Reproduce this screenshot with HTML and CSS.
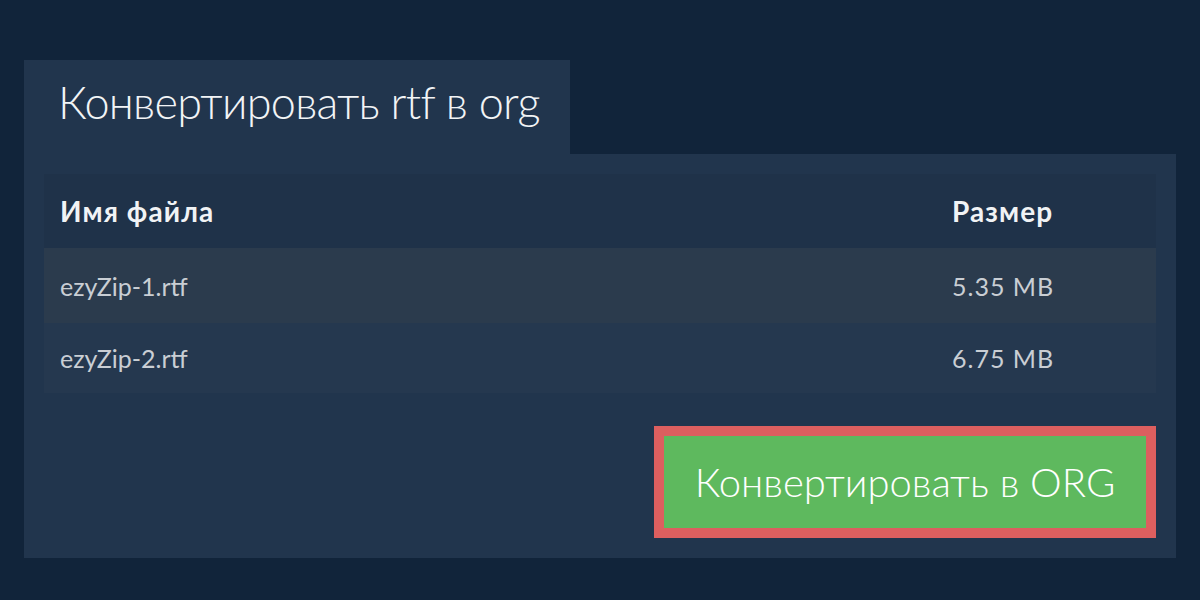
FILE: index.html
```html
<!DOCTYPE html>
<html lang="ru">
<head>
<meta charset="utf-8">
<title>Конвертировать rtf в org</title>
<link rel="stylesheet" href="styles.css">
</head>
<body>
<div class="wrap">
  <div class="tab"><h1 class="title">Конвертировать rtf в org</h1></div>
  <div class="panel">
    <table class="files">
      <thead>
        <tr class="head"><th class="c-name">Имя файла</th><th class="c-size">Размер</th></tr>
      </thead>
      <tbody>
        <tr class="row r1"><td class="c-name">ezyZip-1.rtf</td><td class="c-size">5.35 MB</td></tr>
        <tr class="row r2"><td class="c-name">ezyZip-2.rtf</td><td class="c-size">6.75 MB</td></tr>
      </tbody>
    </table>
    <div class="actions">
      <button class="convert">Конвертировать в ORG</button>
    </div>
  </div>
</div>
</body>
</html>
```

FILE: styles.css
```css
html, body {
  margin: 0;
  padding: 0;
  background: #11243a;
  font-family: Lato, "Noto Sans", sans-serif;
}
.wrap {
  padding: 60px 24px 0 24px;
}
.tab {
  width: 546px;
  height: 94px;
  background: #21354d;
  display: flex;
  align-items: center;
  padding-left: 34px;
  box-sizing: border-box;
}
.title {
  margin: 0;
  font-size: 45px;
  font-weight: 300;
  letter-spacing: -0.7px;
  color: #f2f4f6;
  line-height: 1;
  padding-bottom: 10px;
}
.panel {
  width: 1152px;
  background: #21354d;
  padding: 20px;
  box-sizing: border-box;
}
.files {
  width: 100%;
  border-collapse: collapse;
  font-size: 25px;
}
.files th, .files td {
  padding: 0 16px;
  text-align: left;
}
.c-size { width: 188px; }
.head { height: 74px; background: #1f3249; }
.head th { font-weight: 700; font-size: 28px; color: #f1f3f5; letter-spacing: 1.1px; }
.row td { color: #c9ced4; font-weight: 400; }
.row .c-size { letter-spacing: 1px; }
.r1 { height: 75px; background: #2b3b4d; }
.r2 { height: 70px; background: #25384f; }
.actions {
  display: flex;
  justify-content: flex-end;
  margin-top: 33px;
}
.convert {
  width: 502px;
  height: 112px;
  background: #5eb95e;
  border: 10px solid #dd5f5f;
  color: #ffffff;
  font-family: Lato, "Noto Sans", sans-serif;
  font-size: 40px;
  font-weight: 300;
  padding: 0;
}
```
